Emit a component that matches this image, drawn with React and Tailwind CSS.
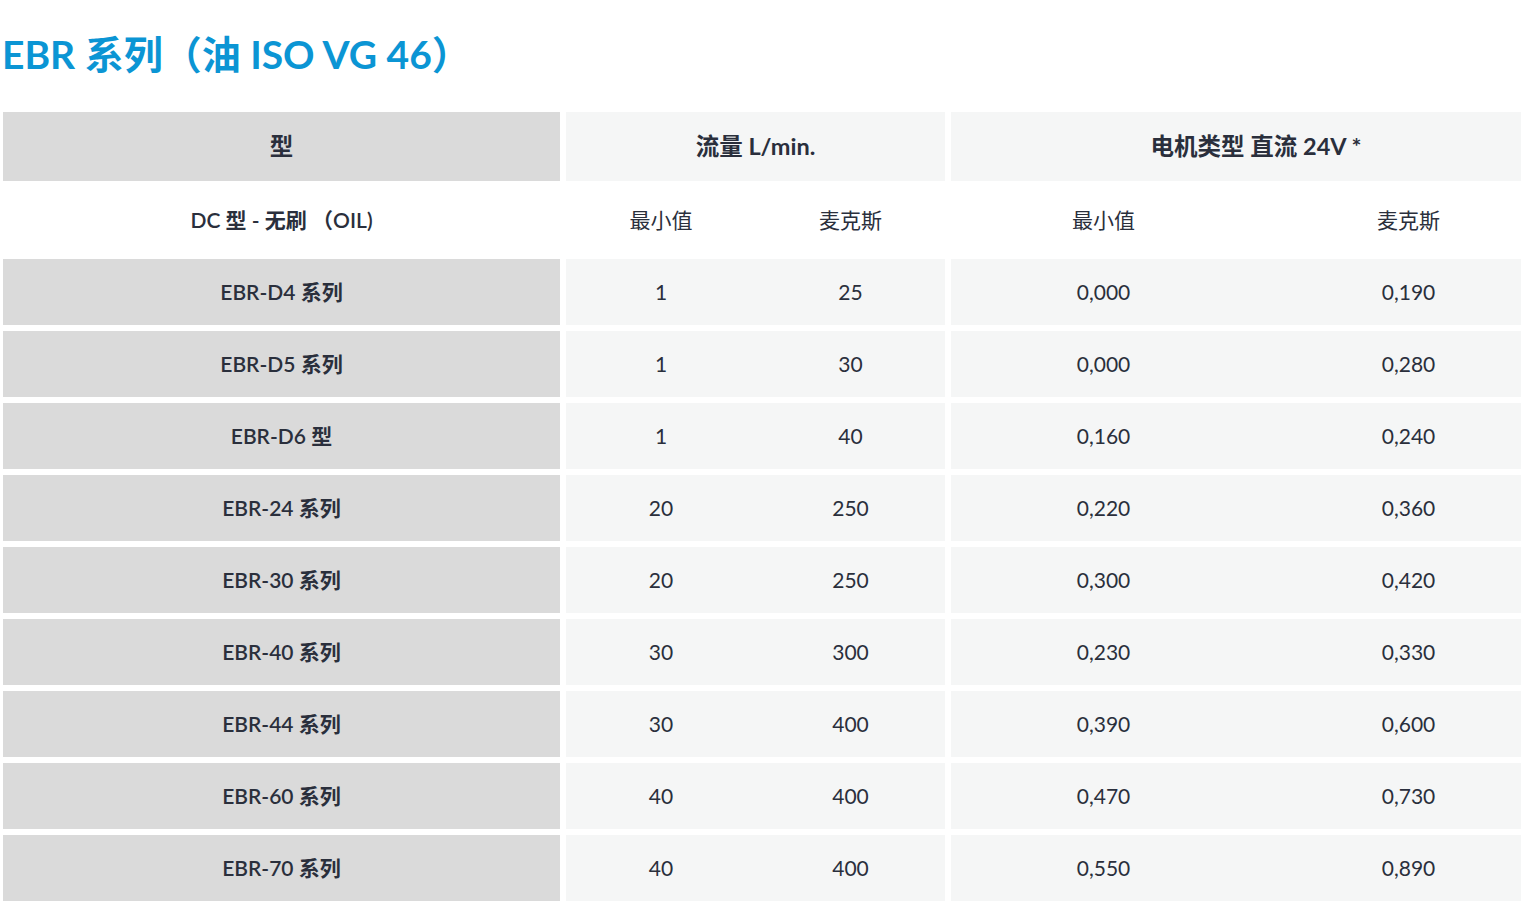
import React from 'react';

const rows = [
  { name: 'EBR-D4 系列', fmin: '1', fmax: '25', mmin: '0,000', mmax: '0,190' },
  { name: 'EBR-D5 系列', fmin: '1', fmax: '30', mmin: '0,000', mmax: '0,280' },
  { name: 'EBR-D6 型', fmin: '1', fmax: '40', mmin: '0,160', mmax: '0,240' },
  { name: 'EBR-24 系列', fmin: '20', fmax: '250', mmin: '0,220', mmax: '0,360' },
  { name: 'EBR-30 系列', fmin: '20', fmax: '250', mmin: '0,300', mmax: '0,420' },
  { name: 'EBR-40 系列', fmin: '30', fmax: '300', mmin: '0,230', mmax: '0,330' },
  { name: 'EBR-44 系列', fmin: '30', fmax: '400', mmin: '0,390', mmax: '0,600' },
  { name: 'EBR-60 系列', fmin: '40', fmax: '400', mmin: '0,470', mmax: '0,730' },
  { name: 'EBR-70 系列', fmin: '40', fmax: '400', mmin: '0,550', mmax: '0,890' },
];

const font = { fontFamily: 'Lato, "Noto Sans CJK SC", sans-serif' };

const App = () => {
  return (
    <div className="w-[1521px] overflow-hidden bg-white text-[#2a2f3c]" style={font}>
      {/* Title */}
      <h2 className="pl-[2px] pt-[27px] pb-[28px] text-[39px] leading-[54px] font-bold text-[#0b95d4]">
        EBR 系列（油 ISO VG 46）
      </h2>

      <table className="w-[1564px] table-fixed border-separate border-spacing-0 text-center">
        <colgroup>
          <col className="w-[563px]" />
          <col className="w-[193px]" />
          <col className="w-[192px]" />
          <col className="w-[308px]" />
          <col className="w-[308px]" />
        </colgroup>
        <thead>
          <tr>
            <th className="h-[75px] border-3 border-white bg-[#dadada] text-[23.5px] font-bold">型</th>
            <th colSpan={2} className="h-[75px] border-3 border-white bg-[#f5f6f6] text-[23.5px] font-bold">
              流量 L/min.
            </th>
            <th colSpan={2} className="h-[75px] border-3 border-white bg-[#f5f6f6] text-[23.5px] font-bold">
              电机类型 直流 24V *
            </th>
          </tr>
          <tr className="text-[21px]">
            <th className="h-[72px] border-3 border-white font-semibold">DC 型 - 无刷 （OIL)</th>
            <th className="h-[72px] border-y-3 border-l-3 border-white font-normal">最小值</th>
            <th className="h-[72px] border-y-3 border-r-3 border-white font-normal">麦克斯</th>
            <th className="h-[72px] border-y-3 border-l-3 border-white font-normal">最小值</th>
            <th className="h-[72px] border-y-3 border-r-3 border-white font-normal">麦克斯</th>
          </tr>
        </thead>
        <tbody className="text-[21px]">
          {rows.map((r) => (
            <tr key={r.name}>
              <td className="h-[72px] border-3 border-white bg-[#dadada] font-semibold">{r.name}</td>
              <td className="h-[72px] border-y-3 border-l-3 border-white bg-[#f5f6f6]">{r.fmin}</td>
              <td className="h-[72px] border-y-3 border-r-3 border-white bg-[#f5f6f6]">{r.fmax}</td>
              <td className="h-[72px] border-y-3 border-l-3 border-white bg-[#f5f6f6]">{r.mmin}</td>
              <td className="h-[72px] border-y-3 border-r-3 border-white bg-[#f5f6f6]">{r.mmax}</td>
            </tr>
          ))}
        </tbody>
      </table>
    </div>
  );
};

export default App;
